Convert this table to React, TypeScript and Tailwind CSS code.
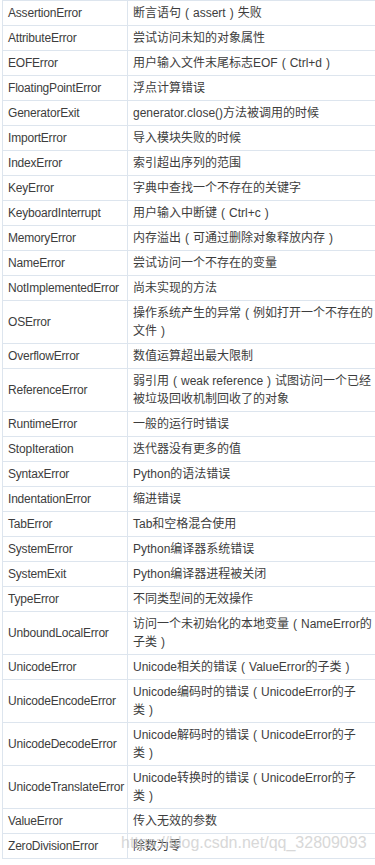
import React from "react";

const rows: [string, string[]][] = [
  ["AssertionError", ["断言语句（assert）失败"]],
  ["AttributeError", ["尝试访问未知的对象属性"]],
  ["EOFError", ["用户输入文件末尾标志EOF（Ctrl+d）"]],
  ["FloatingPointError", ["浮点计算错误"]],
  ["GeneratorExit", ["generator.close()方法被调用的时候"]],
  ["ImportError", ["导入模块失败的时候"]],
  ["IndexError", ["索引超出序列的范围"]],
  ["KeyError", ["字典中查找一个不存在的关键字"]],
  ["KeyboardInterrupt", ["用户输入中断键（Ctrl+c）"]],
  ["MemoryError", ["内存溢出（可通过删除对象释放内存）"]],
  ["NameError", ["尝试访问一个不存在的变量"]],
  ["NotImplementedError", ["尚未实现的方法"]],
  ["OSError", ["操作系统产生的异常（例如打开一个不存在的", "文件）"]],
  ["OverflowError", ["数值运算超出最大限制"]],
  ["ReferenceError", ["弱引用（weak reference）试图访问一个已经", "被垃圾回收机制回收了的对象"]],
  ["RuntimeError", ["一般的运行时错误"]],
  ["StopIteration", ["迭代器没有更多的值"]],
  ["SyntaxError", ["Python的语法错误"]],
  ["IndentationError", ["缩进错误"]],
  ["TabError", ["Tab和空格混合使用"]],
  ["SystemError", ["Python编译器系统错误"]],
  ["SystemExit", ["Python编译器进程被关闭"]],
  ["TypeError", ["不同类型间的无效操作"]],
  ["UnboundLocalError", ["访问一个未初始化的本地变量（NameError的", "子类）"]],
  ["UnicodeError", ["Unicode相关的错误（ValueError的子类）"]],
  ["UnicodeEncodeError", ["Unicode编码时的错误（UnicodeError的子", "类）"]],
  ["UnicodeDecodeError", ["Unicode解码时的错误（UnicodeError的子", "类）"]],
  ["UnicodeTranslateError", ["Unicode转换时的错误（UnicodeError的子", "类）"]],
  ["ValueError", ["传入无效的参数"]],
  ["ZeroDivisionError", ["除数为零"]],
];

function Line({ text }: { text: string }) {
  const parts = text.split(/([（）])/);
  return (
    <div>
      {parts.map((p, i) =>
        p === "（" || p === "）" ? (
          <span key={i} className="inline-block w-[12px] text-center">
            {p === "（" ? "(" : ")"}
          </span>
        ) : (
          <span key={i}>{p}</span>
        )
      )}
    </div>
  );
}

export default function App() {
  return (
    <div
      className="relative w-[375px] h-[865px] overflow-hidden bg-white text-[#3d3d3d] text-[12px] leading-[18px]"
      style={{ fontFamily: '"Liberation Sans", "Noto Sans CJK SC", sans-serif' }}
    >
      <table className="ml-[2px] w-[390px] border-collapse table-fixed">
        <colgroup>
          <col className="w-[125px]" />
          <col className="w-[265px]" />
        </colgroup>
        <tbody>
          {rows.map(([name, desc]) => (
            <tr key={name}>
              <td className="border border-[#dde5ee] pl-[5px] pr-0 py-[3px] align-middle whitespace-nowrap tracking-[-0.2px]">
                {name}
              </td>
              <td className="border border-[#dde5ee] pl-[5px] py-[3px] align-middle whitespace-nowrap">
                {desc.map((l, i) => (
                  <Line key={i} text={l} />
                ))}
              </td>
            </tr>
          ))}
        </tbody>
      </table>
      <div
        className="absolute left-[121px] top-[833px] text-[16px] leading-[20px] text-[#c8c8c8] opacity-70 whitespace-nowrap pointer-events-none"
        style={{ fontFamily: '"Liberation Sans", Arial, sans-serif' }}
      >
        https://blog.csdn.net/qq_32809093
      </div>
    </div>
  );
}
